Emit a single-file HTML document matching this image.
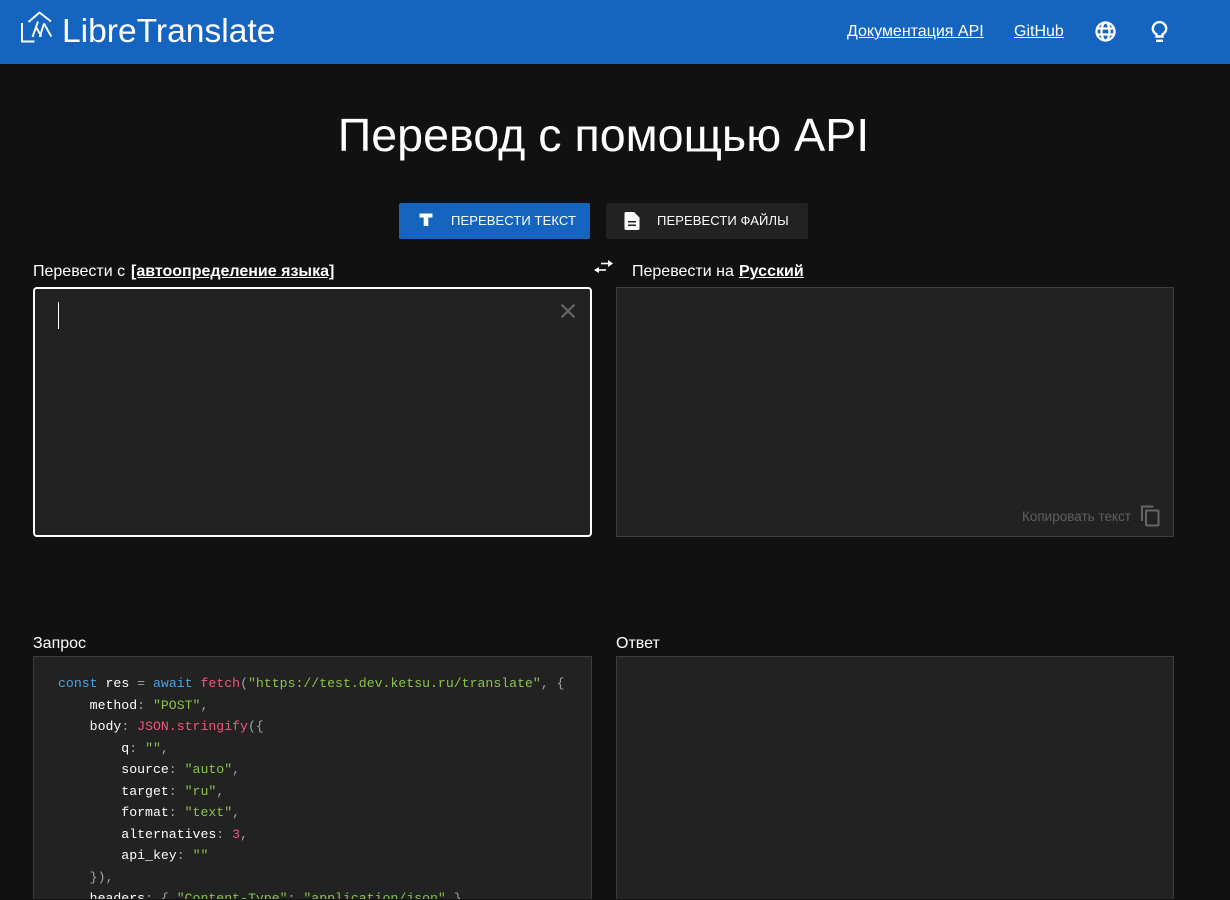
<!DOCTYPE html>
<html lang="ru"><head><meta charset="utf-8"><title>LibreTranslate</title>
<style>
html,body{margin:0;padding:0;background:#111;width:1230px;height:900px;overflow:hidden}
body{position:relative;font-family:"Liberation Sans",Arial,sans-serif;color:#fff}
.a{position:absolute;white-space:nowrap}
.u{text-decoration:underline}
.box{position:absolute;background:#222;border:1px solid #3d3d3d;box-sizing:border-box}
.btn{font-size:13px;line-height:16px;letter-spacing:.1px}
pre{position:absolute;left:58px;top:673px;margin:0;font:13.2px/21.55px "Liberation Mono",monospace;color:#fff;font-weight:400}
.k{color:#4aa3e0}.f{color:#f0567e}.s{color:#8bc34a}.p{color:#9aa5a8}
</style></head><body>
<div class="a" style="left:0;top:0;width:1230px;height:64px;background:#1565c0"></div>
<svg class="a" style="left:0;top:0" width="64" height="64" viewBox="0 0 64 64" fill="none" stroke="#fff" stroke-width="1.9">
<path d="M22 23V41.500H34.500"/><path d="M28.500 22L39.500 12.500L51 21.500"/><path d="M38 21.500L32.500 37M36 27L41.500 36.500"/><path d="M44 23.500L39.700 37M44 23.500L51.300 36.500"/>
</svg>
<div class="a" style="left:62px;top:12px;font-size:33.6px;line-height:40px">LibreTranslate</div>
<div class="a u" style="left:847px;top:23px;font-size:16px;line-height:18px">Документация API</div>
<div class="a u" style="left:1014px;top:23px;font-size:16px;line-height:18px">GitHub</div>
<svg class="a" style="left:1095px;top:21px" width="21" height="21" viewBox="0 0 21 21" fill="none" stroke="#fff" stroke-width="2.300">
<circle cx="10.500" cy="10.500" r="9"/><ellipse cx="10.500" cy="10.500" rx="4" ry="9"/><path d="M2 7.500H19M2 13.500H19"/>
</svg>
<svg class="a" style="left:1150px;top:21px" width="19" height="22" viewBox="0 0 19 22" fill="none" stroke="#fff" stroke-width="2.400">
<path d="M6.500 15.500V13.300C4.200 12 2.800 10 2.800 7.800A6.700 6.700 0 0 1 16.200 7.800C16.200 10 14.800 12 12.500 13.300V15.500Z"/><path d="M6 19.800H13"/>
</svg>
<div class="a" style="left:0;width:1207px;top:106px;text-align:center;font-size:46.600px;line-height:58px">Перевод с помощью API</div>

<div class="a" style="left:399px;top:203px;width:191px;height:36px;background:#1565c0;border-radius:2px"></div>
<svg class="a" style="left:418px;top:212px" width="16" height="16" viewBox="0 0 16 16"><path fill="#fff" d="M1.500 1.500H14.500V5.500H10.300V14H5.700V5.500H1.500Z"/></svg>
<div class="a btn" style="left:451px;top:213px">ПЕРЕВЕСТИ ТЕКСТ</div>
<div class="a" style="left:606px;top:203px;width:202px;height:36px;background:#222;border-radius:2px"></div>
<svg class="a" style="left:623px;top:211px" width="18" height="20" viewBox="0 0 18 20"><path fill="#fff" fill-rule="evenodd" d="M3 1H11L16.500 6.500V17.500A1.500 1.500 0 0 1 15 19H3A1.500 1.500 0 0 1 1.500 17.500V2.500A1.500 1.500 0 0 1 3 1ZM5 10V11.500H13V10ZM5 13.500V15H13V13.500Z"/></svg>
<div class="a btn" style="left:657px;top:213px">ПЕРЕВЕСТИ ФАЙЛЫ</div>

<div class="a" style="left:33px;top:263px;font-size:16px;line-height:18px">Перевести с</div>
<b class="a u" style="left:131px;top:263px;font-size:16px;line-height:18px">[автоопределение языка]</b>
<svg class="a" style="left:590px;top:256px" width="26" height="22" viewBox="590 256 26 22" fill="#fff"><path d="M601 262.700H608V264.300H601Z"/><path d="M608 260L613 263.500L608 267Z"/><path d="M599 269.200H606V270.800H599Z"/><path d="M599 267L594 270L599 273Z"/></svg>
<div class="a" style="left:632px;top:263px;font-size:16px;line-height:18px">Перевести на</div>
<b class="a u" style="left:739px;top:263px;font-size:16px;line-height:18px">Русский</b>

<div class="a" style="left:33px;top:287px;width:559px;height:250px;box-sizing:border-box;background:#222;border:2px solid #fff;border-radius:4px"></div>
<div class="a" style="left:58px;top:302px;width:1px;height:27px;background:#fff"></div>
<svg class="a" style="left:560px;top:303px" width="16" height="16" viewBox="0 0 16 16" stroke="#666" stroke-width="2"><path d="M1.500 1.500L14.500 14.500M14.500 1.500L1.500 14.500"/></svg>

<div class="box" style="left:616px;top:287px;width:558px;height:250px"></div>
<div class="a" style="left:1022px;top:508px;font-size:13.500px;line-height:17px;color:#5f5f5f">Копировать текст</div>
<svg class="a" style="left:1140px;top:505px" width="20" height="22" viewBox="0 0 20 22" fill="none" stroke="#666" stroke-width="2"><path d="M13.500 1.500H2V16"/><rect x="6" y="5.500" width="12.500" height="15" rx="1"/></svg>

<div class="a" style="left:33px;top:635px;font-size:16px;line-height:18px">Запрос</div>
<div class="a" style="left:616px;top:635px;font-size:16px;line-height:18px">Ответ</div>
<div class="box" style="left:33px;top:656px;width:559px;height:243px;border-bottom:0"></div>
<div class="box" style="left:616px;top:656px;width:558px;height:243px;border-bottom:0"></div>
<pre><span class="k">const</span> res <span class="p">=</span> <span class="k">await</span> <span class="f">fetch</span><span class="p">(</span><span class="s">"https://test.dev.ketsu.ru/translate"</span><span class="p">, {</span>
    method<span class="p">:</span> <span class="s">"POST"</span><span class="p">,</span>
    body<span class="p">:</span> <span class="f">JSON.stringify</span><span class="p">({</span>
        q<span class="p">:</span> <span class="s">""</span><span class="p">,</span>
        source<span class="p">:</span> <span class="s">"auto"</span><span class="p">,</span>
        target<span class="p">:</span> <span class="s">"ru"</span><span class="p">,</span>
        format<span class="p">:</span> <span class="s">"text"</span><span class="p">,</span>
        alternatives<span class="p">:</span> <span class="f">3</span><span class="p">,</span>
        api_key<span class="p">:</span> <span class="s">""</span>
    <span class="p">}),</span>
    headers<span class="p">: {</span> <span class="s">"Content-Type"</span><span class="p">:</span> <span class="s">"application/json"</span> <span class="p">}</span></pre>
<div class="a" style="left:0;top:899px;width:1230px;height:1px;background:#111"></div>
</body></html>
